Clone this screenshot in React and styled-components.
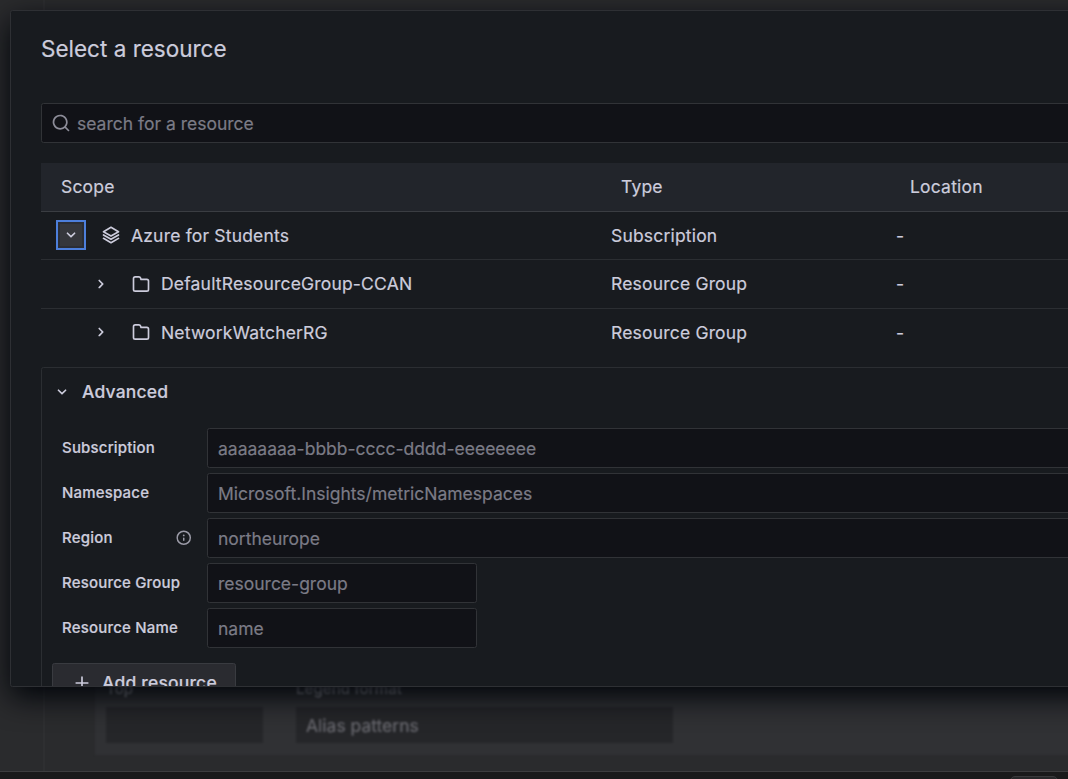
import React from 'react';
import styled, { createGlobalStyle } from 'styled-components';

const GlobalStyle = createGlobalStyle`
  *, *::before, *::after { box-sizing: border-box; }
  html, body { margin: 0; height: 100%; overflow: hidden; background: #1a1a1b; }
  body {
    font-family: Inter, "Liberation Sans", sans-serif;
    font-size: 17.5px;
    line-height: 27.5px;
    letter-spacing: 0.01071em;
    color: rgb(204, 204, 220);
    -webkit-text-stroke: 0.2px currentColor;
  }
`;

const icons = {
  search:
    'M21.71,20.29,18,16.61A9,9,0,1,0,16.61,18l3.68,3.68a1,1,0,0,0,1.42,0A1,1,0,0,0,21.71,20.29ZM11,18a7,7,0,1,1,7-7A7,7,0,0,1,11,18Z',
  angleDown:
    'M17,9.17a1,1,0,0,0-1.41,0L12,12.71,8.46,9.17a1,1,0,0,0-1.41,0,1,1,0,0,0,0,1.42l4.24,4.24a1,1,0,0,0,1.42,0L17,10.59A1,1,0,0,0,17,9.17Z',
  angleRight:
    'M14.83,11.29,10.59,7.05a1,1,0,0,0-1.42,0,1,1,0,0,0,0,1.41L12.71,12,9.17,15.54a1,1,0,0,0,0,1.41,1,1,0,0,0,.71.29,1,1,0,0,0,.71-.29l4.24-4.24A1,1,0,0,0,14.83,11.29Z',
  folder:
    'M19,5.5H12.72l-.32-1a3,3,0,0,0-2.84-2H5a3,3,0,0,0-3,3v13a3,3,0,0,0,3,3H19a3,3,0,0,0,3-3V8.5A3,3,0,0,0,19,5.5Zm1,13a1,1,0,0,1-1,1H5a1,1,0,0,1-1-1V5.5a1,1,0,0,1,1-1H9.56a1,1,0,0,1,.95.68l.54,1.64A1,1,0,0,0,12,7.5h7a1,1,0,0,1,1,1Z',
  layers:
    'M2.5,8.86l9,5.2a1,1,0,0,0,1,0l9-5.2A1,1,0,0,0,22,8a1,1,0,0,0-.5-.87l-9-5.19a1,1,0,0,0-1,0l-9,5.19A1,1,0,0,0,2,8,1,1,0,0,0,2.5,8.86ZM12,4l7,4-7,4L5,8Zm8.5,7.17L12,16,3.5,11.13a1,1,0,0,0-1.37.37,1,1,0,0,0,.37,1.36l9,5.2a1,1,0,0,0,1,0l9-5.2a1,1,0,0,0,.37-1.36A1,1,0,0,0,20.5,11.13Zm0,4L12,20,3.5,15.13a1,1,0,0,0-1.37.37,1,1,0,0,0,.37,1.36l9,5.2a1,1,0,0,0,1,0l9-5.2a1,1,0,0,0,.37-1.36A1,1,0,0,0,20.5,15.13Z',
  plus:
    'M19,11H13V5a1,1,0,0,0-2,0v6H5a1,1,0,0,0,0,2h6v6a1,1,0,0,0,2,0V13h6a1,1,0,0,0,0-2Z',
  info:
    'M12,2A10,10,0,1,0,22,12,10.01114,10.01114,0,0,0,12,2Zm0,18a8,8,0,1,1,8-8A8.00917,8.00917,0,0,1,12,20Zm0-8.5a1,1,0,0,0-1,1v3a1,1,0,0,0,2,0v-3A1,1,0,0,0,12,11.5Zm0-4a1.25,1.25,0,1,0,1.25,1.25A1.25,1.25,0,0,0,12,7.5Z',
};

const Svg = styled.svg`
  display: block;
  flex: none;
  width: ${(p) => p.$size}px;
  height: ${(p) => p.$size}px;
  fill: currentColor;
`;

function Icon({ name, size = 20 }) {
  return (
    <Svg $size={size} viewBox="0 0 24 24" aria-hidden="true">
      <path d={icons[name]} />
    </Svg>
  );
}

const Screen = styled.div`
  position: relative;
  height: 779px;
  overflow: hidden;
`;

/* Page behind the dialog */
const Backdrop = styled.div`
  display: flex;
  flex-direction: column;
  height: 100%;
`;

const Page = styled.div`
  display: flex;
  flex: none;
  height: 772px;
  border-bottom: 1px solid #3d3d3f;
  background: #2a2b2d;
`;

const PageGutter = styled.div`
  width: 45px;
  border-right: 2px solid #2e2f31;
  filter: blur(0.6px);
`;

const PageBody = styled.div`
  flex: 1;
  display: flex;
  flex-direction: column;
  justify-content: flex-end;
  padding: 0 0 16px 50px;
  overflow: hidden;
`;

const OptionsPanel = styled.div`
  display: flex;
  align-items: flex-start;
  gap: 33px;
  height: 124px;
  padding: 47px 11px 0;
  margin-right: -10px;
  background: #303134;
  filter: blur(1px);
`;

const OptionField = styled.div`
  width: ${(p) => p.$width}px;
`;

const OptionLabel = styled.div`
  height: 29px;
  font-size: 15px;
  font-weight: 500;
  line-height: 22px;
  letter-spacing: 0.005em;
  color: #85868e;
`;

const OptionInput = styled.div`
  height: 36px;
  padding: 0 10px;
  line-height: 37px;
  letter-spacing: 0;
  background: #252629;
  color: #6a6a70;
`;

const Footer = styled.div`
  display: flex;
  justify-content: flex-end;
  flex: 1;
  min-height: 0;
  padding: 4px 10px 0 0;
  background: #1a1a1b;
`;

const FooterPill = styled.div`
  width: 48px;
  height: 20px;
  border: 1px solid #3a3a3c;
  border-radius: 5px;
  background: #28282a;
`;

/* Dialog */
const Modal = styled.section`
  position: absolute;
  top: 10px;
  left: 10px;
  width: 1120px;
  height: 677px;
  padding: 0 30px;
  overflow: hidden;
  border: 1px solid #2e3034;
  border-radius: 2.5px;
  background: #181b1f;
  box-shadow: 0 10px 30px rgb(1, 4, 9);
`;

const Title = styled.h1`
  margin: 0;
  padding: 24px 0 41px;
  font-size: 22.5px;
  font-weight: 400;
  line-height: 27px;
  letter-spacing: 0;
`;

const InputBox = styled.div`
  display: flex;
  align-items: center;
  gap: 6px;
  flex: none;
  width: ${(p) => p.$width || '1060px'};
  height: 40px;
  padding: 2px 10px 0;
  border: 1px solid #313337;
  border-radius: 2.5px;
  background: #111217;
  color: #7b7b86;
  letter-spacing: 0;
`;

const SearchIcon = styled.span`
  margin: -3px 0 0 -1px;
  color: #8d8d99;
`;

const Table = styled.div`
  margin-top: 20px;
`;

const Row = styled.div`
  display: grid;
  grid-template-columns: 560px 289px 1fr;
  align-items: center;
  height: ${(p) => p.$height}px;
  border-bottom: 1px solid ${(p) => (p.$last ? 'transparent' : '#2b2e32')};
`;

const HeaderRow = styled(Row)`
  height: 49px;
  border-bottom-color: #3a3d42;
  background: #22252b;
`;

const HeaderCell = styled.div`
  padding: 0 20px;
`;

const Cell = styled.div`
  display: flex;
  align-items: center;
  padding-left: ${(p) => p.$pad}px;
`;

const Toggle = styled.button`
  display: flex;
  align-items: center;
  justify-content: center;
  width: 30px;
  height: 30px;
  margin: -1px 15px 0 0;
  padding: 0;
  border: 2px solid ${(p) => (p.$focused ? '#4d7fdb' : 'transparent')};
  background: ${(p) => (p.$focused ? '#35373b' : 'transparent')};
  box-shadow: ${(p) => (p.$focused ? 'inset 0 0 0 2px #2b2e35' : 'none')};
  color: inherit;
`;

const RowIcon = styled.span`
  margin-top: -1px;
`;

const RowName = styled.span`
  margin-left: 10px;
`;

const Advanced = styled.div`
  height: 400px;
  margin-top: 10px;
  padding: 10px;
  border: 1px solid #2b2e32;
  border-radius: 2.5px;
`;

const AdvancedHeader = styled.div`
  display: flex;
  align-items: center;
  gap: 10px;
  height: 28px;
  font-weight: 500;

  svg {
    margin-top: -1px;
  }
`;

const Fields = styled.div`
  display: flex;
  flex-direction: column;
  gap: 5px;
  margin: 22px 0 15px;
`;

const Field = styled.div`
  display: flex;
`;

const FieldLabel = styled.div`
  display: flex;
  flex: none;
  align-items: center;
  justify-content: space-between;
  width: 155px;
  height: 39px;
  padding: 0 15px 0 10px;
  font-size: 15px;
  font-weight: 500;
`;

const InfoIcon = styled.span`
  color: #9a9aa6;
`;

const AddButton = styled.button`
  display: flex;
  align-items: center;
  gap: 10px;
  width: 184px;
  height: 40px;
  padding: 0 19px;
  border: 1px solid #393b40;
  border-radius: 2.5px;
  background: #2a2b30;
  color: inherit;
  font: inherit;
  font-weight: 500;
  letter-spacing: inherit;
  white-space: nowrap;
`;

const resources = [
  { name: 'Azure for Students', type: 'Subscription', icon: 'layers', open: true, pad: 15, height: 48 },
  { name: 'DefaultResourceGroup-CCAN', type: 'Resource Group', icon: 'folder', pad: 45, height: 49 },
  { name: 'NetworkWatcherRG', type: 'Resource Group', icon: 'folder', pad: 45, height: 48 },
];

const fields = [
  { label: 'Subscription', value: 'aaaaaaaa-bbbb-cccc-dddd-eeeeeeee' },
  { label: 'Namespace', value: 'Microsoft.Insights/metricNamespaces' },
  { label: 'Region', value: 'northeurope', info: true },
  { label: 'Resource Group', value: 'resource-group', width: '270px' },
  { label: 'Resource Name', value: 'name', width: '270px' },
];

export default function App() {
  return (
    <Screen>
      <GlobalStyle />
      <Backdrop>
        <Page>
          <PageGutter />
          <PageBody>
            <OptionsPanel>
              <OptionField $width={157}>
                <OptionLabel>Top</OptionLabel>
                <OptionInput />
              </OptionField>
              <OptionField $width={377}>
                <OptionLabel>Legend format</OptionLabel>
                <OptionInput>Alias patterns</OptionInput>
              </OptionField>
            </OptionsPanel>
          </PageBody>
        </Page>
        <Footer>
          <FooterPill />
        </Footer>
      </Backdrop>

      <Modal>
        <Title>Select a resource</Title>
        <InputBox>
          <SearchIcon>
            <Icon name="search" />
          </SearchIcon>
          search for a resource
        </InputBox>

        <Table>
          <HeaderRow>
            <HeaderCell>Scope</HeaderCell>
            <HeaderCell>Type</HeaderCell>
            <HeaderCell>Location</HeaderCell>
          </HeaderRow>
          {resources.map((r, i) => (
            <Row key={r.name} $height={r.height} $last={i === resources.length - 1}>
              <Cell $pad={r.pad}>
                <Toggle $focused={r.open}>
                  <Icon name={r.open ? 'angleDown' : 'angleRight'} />
                </Toggle>
                <RowIcon>
                  <Icon name={r.icon} />
                </RowIcon>
                <RowName>{r.name}</RowName>
              </Cell>
              <Cell $pad={10}>{r.type}</Cell>
              <Cell $pad={6}>-</Cell>
            </Row>
          ))}
        </Table>

        <Advanced>
          <AdvancedHeader>
            <Icon name="angleDown" />
            Advanced
          </AdvancedHeader>
          <Fields>
            {fields.map((f) => (
              <Field key={f.label}>
                <FieldLabel>
                  {f.label}
                  {f.info && (
                    <InfoIcon>
                      <Icon name="info" size={17.5} />
                    </InfoIcon>
                  )}
                </FieldLabel>
                <InputBox $width={f.width}>{f.value}</InputBox>
              </Field>
            ))}
          </Fields>
          <AddButton>
            <Icon name="plus" />
            Add resource
          </AddButton>
        </Advanced>
      </Modal>
    </Screen>
  );
}
